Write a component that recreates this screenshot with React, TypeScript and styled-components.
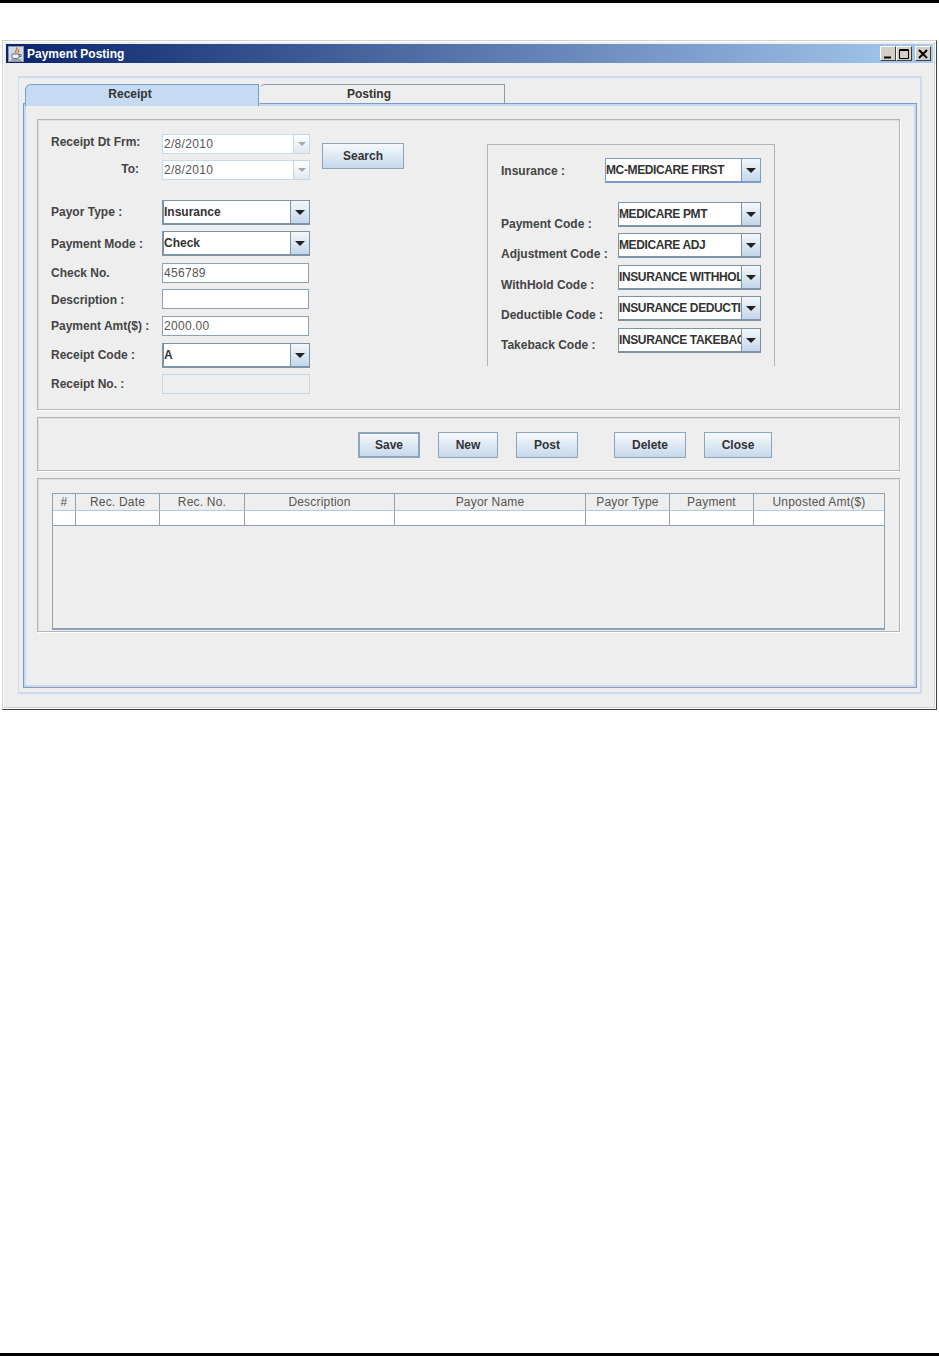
import styled, { createGlobalStyle } from "styled-components";

const GlobalStyle = createGlobalStyle`
  html, body {
    margin: 0;
    padding: 0;
    background: #fff;
  }
  body {
    font-family: "Liberation Sans", Arial, sans-serif;
  }
`;

const Page = styled.div`
  width: 939px;
  height: 1356px;
  display: flex;
  flex-direction: column;
  overflow: hidden;
`;

const TopRule = styled.div`
  height: 3px;
  background: #000;
  margin-bottom: 37px;
`;

const BottomRule = styled.div`
  height: 3px;
  background: #000;
  margin-top: auto;
`;

const Window = styled.div`
  box-sizing: border-box;
  width: 935px;
  height: 670px;
  margin-left: 2px;
  padding: 3px 3px 4px 3px;
  background: #eeeeee;
  border: 1px solid;
  border-color: #d4d0c8 #404040 #404040 #d4d0c8;
  box-shadow: inset 0 0 0 1px #ffffff, inset -1px -1px 0 1px #d4d0c8;
  display: flex;
  flex-direction: column;
`;

const TitleBar = styled.div`
  height: 19px;
  flex: none;
  display: flex;
  align-items: center;
  padding: 0 2px;
  background: linear-gradient(to right, #0a246a, #a6caf0);
`;

const TitleText = styled.span`
  margin-left: 3px;
  color: #fff;
  font-size: 12px;
  font-weight: bold;
`;

const WindowButtons = styled.div`
  margin-left: auto;
  display: flex;
`;

const WindowButton = styled.div<{ $gap?: number }>`
  box-sizing: border-box;
  width: 16px;
  height: 15px;
  margin-left: ${(p) => p.$gap ?? 0}px;
  background: #d4d0c8;
  border: 1px solid;
  border-color: #fff #404040 #404040 #fff;
  display: flex;
  align-items: center;
  justify-content: center;
`;

const OuterPanel = styled.div`
  box-sizing: border-box;
  margin: 13px 11px 0 12px;
  height: 618px;
  padding: 6px 3px 0 4px;
  border: 2px solid #cddcec;
  border-left-width: 1px;
`;

const TabRow = styled.div`
  display: flex;
  height: 20px;
  margin-left: 2px;
  position: relative;
  z-index: 1;
`;

const Tab = styled.div<{ $active?: boolean; $width: number; $shift: number }>`
  box-sizing: border-box;
  width: ${(p) => p.$width}px;
  height: ${(p) => (p.$active ? 22 : 20)}px;
  padding: 0 ${(p) => p.$shift}px ${(p) => (p.$active ? 3 : 1)}px 0;
  display: flex;
  align-items: center;
  justify-content: center;
  font-size: 12px;
  font-weight: bold;
  color: #333;
  background: ${(p) => (p.$active ? "#c6dbf1" : "#eeeeee")};
  border: 1px solid ${(p) => (p.$active ? "#7a9cc6" : "#8a9bab")};
  border-bottom: ${(p) => (p.$active ? "none" : "1px solid #7a9cc6")};
  border-left: 1px solid ${(p) => (p.$active ? "#7a9cc6" : "transparent")};
  border-top-left-radius: 6px;
`;

const TabPane = styled.div`
  box-sizing: border-box;
  height: 585px;
  margin-top: -1px;
  padding: 15px 16px 0 13px;
  border: 1px solid #7a9cc6;
  border-right-color: #8a9bab;
  border-bottom-color: #8a9bab;
  box-shadow: inset 0 0 0 2px #c6dbf1;
  display: flex;
  flex-direction: column;
  gap: 7px;
`;

const Section = styled.div<{ $height: number }>`
  box-sizing: border-box;
  height: ${(p) => p.$height}px;
  flex: none;
  border: 1px solid #b4b4b4;
  box-shadow: 1px 1px 0 #fff, inset 1px 1px 0 #e0e0e0;
`;

const FormSection = styled(Section)`
  display: flex;
  padding: 14px 0 0 13px;
`;

const LeftColumn = styled.div`
  width: 271px;
  flex: none;
  display: flex;
  flex-direction: column;
`;

const SearchColumn = styled.div`
  width: 165px;
  flex: none;
  padding-top: 9px;
`;

const Row = styled.div<{ $top?: number; $height: number }>`
  display: flex;
  align-items: center;
  height: ${(p) => p.$height}px;
  margin-top: ${(p) => p.$top ?? 0}px;
`;

const Label = styled.span<{ $width?: number; $right?: boolean; $drop?: number }>`
  flex: none;
  width: ${(p) => p.$width ?? 111}px;
  text-align: ${(p) => (p.$right ? "right" : "left")};
  padding-right: ${(p) => (p.$right ? 23 : 0)}px;
  box-sizing: border-box;
  transform: translateY(${(p) => p.$drop ?? 0}px);
  font-size: 12px;
  font-weight: bold;
  color: #444;
  white-space: nowrap;
`;

const Field = styled.div<{ $disabled?: boolean; $light?: boolean; $width?: number }>`
  box-sizing: border-box;
  width: ${(p) => p.$width ?? 147}px;
  height: 100%;
  padding-left: 1px;
  display: flex;
  align-items: center;
  font-size: 12px;
  letter-spacing: 0.3px;
  color: #555;
  background: ${(p) => (p.$disabled ? "#eeeeee" : "#ffffff")};
  border: 1px solid ${(p) => (p.$light || p.$disabled ? "#c6dbe9" : "#8fa2b5")};
`;

const DateBox = styled.div`
  display: flex;
  width: 148px;
  height: 100%;
`;

const DateInput = styled(Field)`
  flex: 1;
  width: auto;
  border-right: none;
`;

const DateArrow = styled.div`
  box-sizing: border-box;
  width: 17px;
  flex: none;
  display: flex;
  align-items: center;
  justify-content: center;
  border: 1px solid #c6d6e4;
  background: linear-gradient(to bottom, #ffffff, #e2e8ee);
`;

const Caret = styled.span<{ $muted?: boolean }>`
  width: 0;
  height: 0;
  border-left: ${(p) => (p.$muted ? 4 : 5)}px solid transparent;
  border-right: ${(p) => (p.$muted ? 4 : 5)}px solid transparent;
  border-top: ${(p) => (p.$muted ? 4 : 5)}px solid ${(p) => (p.$muted ? "#a0a8b0" : "#222")};
`;

const Combo = styled.div<{ $width?: number; $blue?: boolean; $tight?: boolean }>`
  box-sizing: border-box;
  width: ${(p) => p.$width ?? 148}px;
  height: 100%;
  display: flex;
  border: 1px solid ${(p) => (p.$blue ? "#7a9cc6" : "#7f93a6")};
  border-width: 1px 1px 2px ${(p) => (p.$tight ? 1 : 2)}px;
  background: #fff;
`;

const ComboText = styled.div<{ $tight?: boolean }>`
  flex: 1;
  min-width: 0;
  overflow: hidden;
  display: flex;
  align-items: center;
  font-size: 12px;
  font-weight: bold;
  letter-spacing: ${(p) => (p.$tight ? -0.38 : 0)}px;
  color: #333;
  white-space: nowrap;
`;

const ComboArrow = styled.div`
  box-sizing: border-box;
  width: 19px;
  flex: none;
  display: flex;
  align-items: center;
  justify-content: center;
  border-left: 1px solid #7f93a6;
  background: linear-gradient(to bottom, #f4f8fb, #c3d7ea);
`;

const ActionButton = styled.button<{ $width: number; $gap?: number; $focused?: boolean }>`
  box-sizing: border-box;
  width: ${(p) => p.$width}px;
  height: 26px;
  flex: none;
  padding: 0;
  margin-left: ${(p) => p.$gap ?? 0}px;
  font-family: inherit;
  font-size: 12px;
  font-weight: bold;
  color: #333;
  background: linear-gradient(to bottom, #f6f9fc, #c6d9ec);
  border: ${(p) => (p.$focused ? 2 : 1)}px solid #8ea4ba;
`;

const InsuranceBox = styled.div`
  box-sizing: border-box;
  width: 288px;
  height: 222px;
  margin-top: 10px;
  padding: 13px 12px 0 13px;
  border: 1px solid #b4b4b4;
  border-bottom: none;
  display: flex;
  flex-direction: column;
`;

const ActionBar = styled(Section)`
  display: flex;
  align-items: center;
  padding: 2px 0 0 320px;
`;

const TableSection = styled(Section)`
  padding: 14px 14px 0 14px;
`;

const Grid = styled.div`
  box-sizing: border-box;
  height: 137px;
  border: 1px solid #8fa2b5;
  border-bottom-width: 2px;
`;

const GridRow = styled.div<{ $head?: boolean }>`
  display: flex;
  height: ${(p) => (p.$head ? 16 : 14)}px;
  background: ${(p) => (p.$head ? "#eeeeee" : "#ffffff")};
  border-bottom: 1px solid ${(p) => (p.$head ? "#b8c8d8" : "#8fa2b5")};
`;

const GridCell = styled.div<{ $width: number }>`
  box-sizing: border-box;
  width: ${(p) => p.$width}px;
  flex: none;
  display: flex;
  align-items: center;
  justify-content: center;
  font-size: 12px;
  letter-spacing: 0.2px;
  color: #555;
  border-right: 1px solid #8fa2b5;
  &:last-child {
    border-right: none;
  }
`;

const columns = [
  { name: "#", width: 23 },
  { name: "Rec. Date", width: 84 },
  { name: "Rec. No.", width: 85 },
  { name: "Description", width: 150 },
  { name: "Payor Name", width: 191 },
  { name: "Payor Type", width: 84 },
  { name: "Payment", width: 84 },
  { name: "Unposted Amt($)", width: 130 },
];

const insuranceCodes = [
  { label: "Payment Code :", value: "MEDICARE PMT", top: 19, drop: 9 },
  { label: "Adjustment Code :", value: "MEDICARE ADJ", top: 6, drop: 8 },
  { label: "WithHold Code :", value: "INSURANCE WITHHOLD", top: 7, drop: 7 },
  { label: "Deductible Code :", value: "INSURANCE DEDUCTIBLE", top: 6, drop: 6 },
  { label: "Takeback Code :", value: "INSURANCE TAKEBACK", top: 7, drop: 4 },
];

function JavaIcon() {
  return (
    <svg width="16" height="16" viewBox="0 0 16 16">
      <rect x="0.5" y="0.5" width="15" height="15" fill="#cfd9e6" stroke="#8c97a8" />
      <path d="M8.5 1.5c2 2-2.500 3-.5 5.500M10.500 3.500c.8 1-.8 2 0 3.500" stroke="#e2711d" strokeWidth="1.4" fill="none" />
      <path d="M4 8h7v2.500a2 2 0 0 1-2 2H6a2 2 0 0 1-2-2z" fill="#eef1f5" stroke="#66707c" />
      <path d="M11 8.500h2v2h-2M3 14h10" stroke="#66707c" fill="none" />
    </svg>
  );
}

function MinimizeGlyph() {
  return (
    <svg width="10" height="10" viewBox="0 0 10 10">
      <rect x="1" y="7.500" width="7" height="2" fill="#000" />
    </svg>
  );
}

function MaximizeGlyph() {
  return (
    <svg width="10" height="10" viewBox="0 0 10 10">
      <path d="M0.500 0.500h9v9h-9zM0.500 1.500h9" stroke="#000" fill="none" />
    </svg>
  );
}

function CloseGlyph() {
  return (
    <svg width="10" height="10" viewBox="0 0 10 10">
      <path d="M1 1l8 8M9 1l-8 8" stroke="#000" strokeWidth="2" fill="none" />
    </svg>
  );
}

function ComboBox({
  value,
  width,
  blue,
  tight,
}: {
  value: string;
  width?: number;
  blue?: boolean;
  tight?: boolean;
}) {
  return (
    <Combo $width={width} $blue={blue} $tight={tight}>
      <ComboText $tight={tight}>{value}</ComboText>
      <ComboArrow>
        <Caret />
      </ComboArrow>
    </Combo>
  );
}

function DateField({ value }: { value: string }) {
  return (
    <DateBox>
      <DateInput $light>{value}</DateInput>
      <DateArrow>
        <Caret $muted />
      </DateArrow>
    </DateBox>
  );
}

export default function App() {
  return (
    <Page>
      <GlobalStyle />
      <TopRule />
      <Window>
        <TitleBar>
          <JavaIcon />
          <TitleText>Payment Posting</TitleText>
          <WindowButtons>
            <WindowButton><MinimizeGlyph /></WindowButton>
            <WindowButton><MaximizeGlyph /></WindowButton>
            <WindowButton $gap={3}><CloseGlyph /></WindowButton>
          </WindowButtons>
        </TitleBar>
        <OuterPanel>
          <TabRow>
            <Tab $active $width={234} $shift={24}>Receipt</Tab>
            <Tab $width={246} $shift={26}>Posting</Tab>
          </TabRow>
          <TabPane>
            <FormSection $height={291}>
              <LeftColumn>
                <Row $height={20}>
                  <Label $drop={-2}>Receipt Dt Frm:</Label>
                  <DateField value="2/8/2010" />
                </Row>
                <Row $height={20} $top={6}>
                  <Label $right $drop={-1}>To:</Label>
                  <DateField value="2/8/2010" />
                </Row>
                <Row $height={25} $top={20}>
                  <Label $drop={-1}>Payor Type :</Label>
                  <ComboBox value="Insurance" />
                </Row>
                <Row $height={25} $top={6}>
                  <Label>Payment Mode :</Label>
                  <ComboBox value="Check" />
                </Row>
                <Row $height={20} $top={7}>
                  <Label>Check No.</Label>
                  <Field>456789</Field>
                </Row>
                <Row $height={20} $top={6}>
                  <Label $drop={1}>Description :</Label>
                  <Field />
                </Row>
                <Row $height={20} $top={7}>
                  <Label>Payment Amt($) :</Label>
                  <Field>2000.00</Field>
                </Row>
                <Row $height={25} $top={7}>
                  <Label $drop={-1}>Receipt Code :</Label>
                  <ComboBox value="A" />
                </Row>
                <Row $height={20} $top={6}>
                  <Label>Receipt No. :</Label>
                  <Field $disabled $width={148} />
                </Row>
              </LeftColumn>
              <SearchColumn>
                <ActionButton $width={82}>Search</ActionButton>
              </SearchColumn>
              <InsuranceBox>
                <Row $height={25}>
                  <Label $width={104}>Insurance :</Label>
                  <ComboBox value="MC-MEDICARE FIRST" width={156} blue tight />
                </Row>
                {insuranceCodes.map((code) => (
                  <Row key={code.label} $height={25} $top={code.top}>
                    <Label $width={117} $drop={code.drop}>{code.label}</Label>
                    <ComboBox value={code.value} width={143} tight />
                  </Row>
                ))}
              </InsuranceBox>
            </FormSection>
            <ActionBar $height={54}>
              <ActionButton $width={62} $focused>Save</ActionButton>
              <ActionButton $width={60} $gap={18}>New</ActionButton>
              <ActionButton $width={62} $gap={18}>Post</ActionButton>
              <ActionButton $width={72} $gap={36}>Delete</ActionButton>
              <ActionButton $width={68} $gap={18}>Close</ActionButton>
            </ActionBar>
            <TableSection $height={154}>
              <Grid>
                <GridRow $head>
                  {columns.map((col) => (
                    <GridCell key={col.name} $width={col.width}>{col.name}</GridCell>
                  ))}
                </GridRow>
                <GridRow>
                  {columns.map((col) => (
                    <GridCell key={col.name} $width={col.width} />
                  ))}
                </GridRow>
              </Grid>
            </TableSection>
          </TabPane>
        </OuterPanel>
      </Window>
      <BottomRule />
    </Page>
  );
}
